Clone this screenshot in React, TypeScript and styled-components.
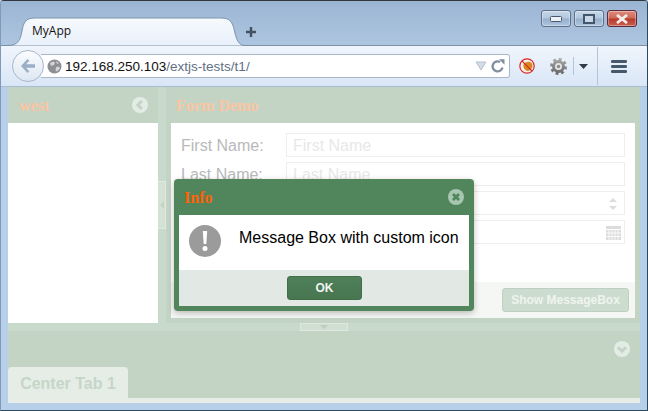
import React from 'react';
import styled, { createGlobalStyle } from 'styled-components';

const Global = createGlobalStyle`
  html, body { margin: 0; padding: 0; background: #b8cfe9; overflow: hidden; }
  * { box-sizing: border-box; }
`;

const Win = styled.div`
  position: relative; width: 648px; height: 411px; display: flex; flex-direction: column;
  background: #b8cfe9; border: 1px solid #2c4a5c; border-top-color: #33363a; border-left-color: #7f9ab8; border-radius: 4px 4px 0 0;
  font-family: "Liberation Sans", Arial, sans-serif; overflow: hidden;
`;
const TitleBar = styled.div`
  height: 45px; flex: none; display: flex; align-items: flex-end; padding-left: 7px; position: relative;
  background: linear-gradient(#9ab5d3, #aec5e0); border-bottom: 1px solid #7c91a8;
`;
const Tab = styled.div`
  position: relative; width: 236px; height: 29px; margin-bottom: -1px; flex: none;
  display: flex; align-items: center; padding: 0 0 3px 24px; font-size: 12px; color: #111; font-family: "Open Sans", sans-serif;
`;
const TabShape = styled.svg`position: absolute; left: 0; top: 0;`;
const TabLabel = styled.span`position: relative;`;
const NewTab = styled.svg`margin: 0 0 7px 1px;`;
const Controls = styled.div`position: absolute; top: 9px; right: 10px; display: flex; gap: 3px;`;
const Ctl = styled.div<{ $close?: boolean }>`
  width: 30px; height: 17px; border-radius: 3px; display: flex; align-items: center; justify-content: center;
  border: 1px solid ${p => p.$close ? '#5c2a3c' : '#5d7088'};
  box-shadow: inset 0 0 0 1px rgba(255,255,255,.35);
  background: ${p => p.$close ? 'linear-gradient(#dd8c7e 0%, #cf6a5a 45%, #b83c2e 55%, #c8604e 100%)' : 'linear-gradient(#c8d8e9 0%, #b2c7df 45%, #97b1cd 55%, #adc4dd 100%)'};
`;
const Nav = styled.div`
  height: 41px; flex: none; display: flex; align-items: center; padding-left: 11px; position: relative;
  background: linear-gradient(#f0f5fc, #d9e6f7); border-bottom: 1px solid #a8bcd2;
`;
const Back = styled.div`
  width: 32px; height: 32px; flex: none; border-radius: 50%; border: 1px solid #a9b8c9; z-index: 1; margin-right: -3px;
  background: linear-gradient(#fbfcfe, #dde7f3); display: flex; align-items: center; justify-content: center;
`;
const UrlBar = styled.div`
  width: 469px; height: 24px; flex: none; background: #fff; border: 1px solid #a9b8c9; border-left: none; border-radius: 0 3px 3px 0;
  display: flex; align-items: center; padding: 0 4px 0 6px; font-size: 13.5px; color: #111;
`;
const UrlText = styled.span`margin-left: 3px; flex: 1; white-space: nowrap;`;
const UrlPath = styled.span`color: #5f7085;`;
const Tools = styled.div`display: flex; align-items: center; flex: 1; padding-left: 9px;`;
const Sep = styled.div<{ $h: number; $ml: number }>`width: 1px; height: ${p => p.$h}px; margin-left: ${p => p.$ml}px; background: #b4c4d6;`;

const Content = styled.div`
  flex: none; height: 316px; margin: 0 7px; display: flex; flex-direction: column; background: #c3d4c5;
`;
const Top = styled.div`height: 236px; flex: none; display: flex; background: #c8dacb;`;
const West = styled.div`width: 150px; flex: none; display: flex; flex-direction: column;`;
const Head = styled.div`
  height: 36px; flex: none; background: #c3d4c5; display: flex; align-items: center; justify-content: space-between;
  padding: 0 10px 0 11px; font: bold 16px "Liberation Serif", serif; color: #fcc4a2;
`;
const HeadTitle = styled.span`padding-top: 2px;`;
const WestBody = styled.div`flex: 1; background: #fff;`;
const VSplit = styled.div`width: 8px; flex: none; position: relative;`;
const VHandle = styled.div`
  position: absolute; top: 94px; left: 0; width: 8px; height: 48px; background: #d4e2d6; border: 1px solid #dde8de; border-left: none;
  display: flex; align-items: center; justify-content: center;
`;
const Center = styled.div`flex: 1; display: flex; flex-direction: column; background: #c3d4c5; padding: 0 5px 5px 0;`;
const CenterHead = styled(Head)`padding-left: 10px;`;
const Form = styled.div`flex: 1; margin-left: 5px; background: #fff; display: flex; flex-direction: column;`;
const Fields = styled.div`flex: 1; padding: 10px 10px 0 10px; display: flex; flex-direction: column; gap: 5px;`;
const Row = styled.div`display: flex; align-items: center; height: 24px;`;
const Label = styled.label`width: 105px; flex: none; padding-top: 1px; font-size: 16px; color: #b9b9b9;`;
const Field = styled.div`
  flex: 1; height: 24px; border: 1px solid #eeeeee; display: flex; align-items: center; justify-content: space-between;
  padding: 1px 3px 0 6px; font-size: 16px; color: #e8e8e8;
`;
const FormFoot = styled.div`height: 36px; flex: none; background: #f5f7f5; display: flex; align-items: center; justify-content: flex-end; padding-right: 6px;`;
const ShowBtn = styled.div`
  width: 127px; height: 24px; background: #ccdccf; border: 1px solid #bed0c2; border-radius: 3px;
  display: flex; align-items: center; justify-content: center; font-size: 12px; font-weight: bold; color: #eff4f0;
`;
const HSplit = styled.div`height: 8px; flex: none; background: #c8dacb; display: flex; justify-content: center;`;
const HHandle = styled.div`width: 48px; height: 8px; background: #d0dfd2; border: 1px solid #dde8de; display: flex; align-items: center; justify-content: center;`;
const South = styled.div`flex: 1; display: flex; flex-direction: column; background: #c3d4c5;`;
const SouthTool = styled.div`height: 36px; flex: none; display: flex; align-items: center; justify-content: flex-end; padding-right: 10px;`;
const TabRow = styled.div`height: 31px; flex: none; display: flex;`;
const CenterTab = styled.div`
  width: 120px; background: #e6ede7; border-radius: 4px 4px 0 0; display: flex; align-items: center; justify-content: center;
  padding-top: 2px; font-size: 16px; font-weight: bold; color: #c5d6c8;
`;
const TabStrip = styled.div`height: 5px; flex: none; background: #e6ede7;`;

const Dialog = styled.div`
  position: absolute; left: 173px; top: 178px; width: 300px; height: 132px; padding: 0 5px 5px; background: #51855c; border-radius: 4px;
  display: flex; flex-direction: column; box-shadow: 0 2px 6px rgba(0,0,0,.25);
`;
const DialogHead = styled.div`
  height: 36px; flex: none; display: flex; align-items: center; justify-content: space-between; padding: 0 5px 0 5px;
  font: bold 16px "Liberation Serif", serif; color: #ff6207;
`;
const DialogBody = styled.div`height: 55px; flex: none; background: #fff; display: flex; align-items: center; padding: 0 0 4px 10px; gap: 18px; font-size: 16px; color: #000;`;
const DialogText = styled.span`margin-bottom: 6px;`;
const DialogFoot = styled.div`flex: 1; background: #e2e8e4; display: flex; align-items: center; justify-content: center;`;
const OkBtn = styled.div`
  width: 75px; height: 24px; border: 1px solid #3f6f4a; border-radius: 3px; background: linear-gradient(#4f8059, #477651);
  display: flex; align-items: center; justify-content: center; padding-left: 1px; font-size: 12px; font-weight: bold; color: #f0f4f0;
`;

const Chevron = ({ dir }: { dir: 'left' | 'down' }) => (
  <svg width="16" height="16" viewBox="0 0 16 16">
    <circle cx="8" cy="8" r="8" fill="#e3ece4" />
    <path d={dir === 'left' ? 'M9.800 4 5.800 8l4 4' : 'M4 6.200l4 4 4-4'} fill="none" stroke="#c3d4c5" strokeWidth="2.800" />
  </svg>
);

export default function App() {
  return (
    <>
      <Global />
      <Win>
        <TitleBar>
          <Tab>
            <TabShape width="236" height="29" viewBox="0 0 236 29">
              <defs>
                <linearGradient id="tg" x1="0" y1="0" x2="0" y2="1">
                  <stop offset="0" stopColor="#f7fafd" />
                  <stop offset="1" stopColor="#e8f0fa" />
                </linearGradient>
              </defs>
              <path d="M0 28.5C10 28 12 24 14 14 15.500 5 18 1 27 1H213c9 0 11.500 4 13.500 13 2 9 4 13.500 9.500 14.500" fill="url(#tg)" stroke="#7f93ab" />
            </TabShape>
            <TabLabel>MyApp</TabLabel>
          </Tab>
          <NewTab width="12" height="12" viewBox="0 0 12 12"><path d="M6 1v10M1 6h10" stroke="#44525f" strokeWidth="2.400" /></NewTab>
          <Controls>
            <Ctl><svg width="12" height="6"><rect x=".5" y=".5" width="11" height="5" rx="1" fill="#eef2f6" stroke="#47586b" /></svg></Ctl>
            <Ctl><svg width="12" height="10"><rect x="1" y="1" width="10" height="8" fill="#c9d8e8" stroke="#44566a" strokeWidth="2" /></svg></Ctl>
            <Ctl $close><svg width="14" height="10" viewBox="0 0 14 10"><path d="M2 1l10 8M12 1 2 9" stroke="#f4ece8" strokeWidth="2.800" /></svg></Ctl>
          </Controls>
        </TitleBar>
        <Nav>
          <Back><svg width="18" height="16" viewBox="0 0 18 16"><path d="M8.500 1 2 8l6.500 7 1.800-1.800L7 9.800h9V6.200H7l3.300-3.400z" fill="#9aafc6" /></svg></Back>
          <UrlBar>
            <svg width="15" height="15" viewBox="0 0 15 15">
              <circle cx="7.500" cy="7.500" r="7" fill="#8d8f92" />
              <path d="M3 4l3-1.500 2 1-1 2.500-3 1zM9 8l3-.5 1 2-3 3-1.500-1zM9 2l3 2-2 1z" fill="#d2d4d6" />
            </svg>
            <UrlText>192.168.250.103<UrlPath>/extjs-tests/t1/</UrlPath></UrlText>
            <svg width="12" height="10" viewBox="0 0 12 10" style={{ marginRight: 4 }}><path d="M1 1h10L6 9z" fill="#d3dbe4" stroke="#b6c2ce" /></svg>
            <svg width="14" height="14" viewBox="0 0 14 14"><path d="M11.500 8.500A5 5 0 1 1 9 3" fill="none" stroke="#7f8e9e" strokeWidth="2.300" /><path d="M8 .3h5.500v5.400z" fill="#7f8e9e" /></svg>
          </UrlBar>
          <Tools>
            <svg width="16" height="16" viewBox="0 0 16 16">
              <circle cx="8" cy="8" r="7.200" fill="#f4f1e8" stroke="#d8262c" strokeWidth="1.200" />
              <path d="M4.500 6.500c2-3.500 6.500-3.500 8.500-1 1.500 3-.5 6.800-4 7.500-2 .3-5.500-3-4.500-6.500z" fill="#d9861e" />
              <path d="M3 3l10 10" stroke="#c8322a" strokeWidth="1.100" />
            </svg>
            <svg width="17" height="17" viewBox="0 0 17 17" style={{ marginLeft: 15 }}>
              <defs>
                <linearGradient id="gg" x1="0" y1="0" x2="0" y2="1">
                  <stop offset="0" stopColor="#a4a4a4" />
                  <stop offset="1" stopColor="#6a6a6a" />
                </linearGradient>
              </defs>
              <circle cx="8.500" cy="8.500" r="6.500" fill="url(#gg)" />
              <circle cx="8.500" cy="8.500" r="7" fill="none" stroke="url(#gg)" strokeWidth="3" strokeDasharray="2.750 2.750" />
              <circle cx="8.500" cy="8.500" r="3.500" fill="#e4e6e8" />
              <circle cx="8.500" cy="8.500" r="1.800" fill="#8c8c8c" />
            </svg>
            <Sep $h={18} $ml={6} />
            <svg width="9" height="5" viewBox="0 0 9 5" style={{ marginLeft: 5 }}><path d="M0 0h9L4.500 5z" fill="#2e3a46" /></svg>
            <Sep $h={38} $ml={9} />
            <svg width="16" height="13" viewBox="0 0 16 13" style={{ marginLeft: 13 }}>
              <rect x="0" y="0" width="16" height="3" rx="1.200" fill="#47586a" />
              <rect x="0" y="5" width="16" height="3" rx="1.200" fill="#47586a" />
              <rect x="0" y="10" width="16" height="3" rx="1.200" fill="#47586a" />
            </svg>
          </Tools>
        </Nav>
        <Content>
          <Top>
            <West>
              <Head><HeadTitle>west</HeadTitle><Chevron dir="left" /></Head>
              <WestBody />
            </West>
            <VSplit>
              <VHandle><svg width="4" height="8" viewBox="0 0 4 8"><path d="M4 0v8L0 4z" fill="#c3d4c5" /></svg></VHandle>
            </VSplit>
            <Center>
              <CenterHead><HeadTitle>Form Demo</HeadTitle></CenterHead>
              <Form>
                <Fields>
                  <Row><Label>First Name:</Label><Field>First Name</Field></Row>
                  <Row><Label>Last Name:</Label><Field>Last Name</Field></Row>
                  <Row><Label />
                    <Field>
                      <span />
                      <svg width="8" height="12" viewBox="0 0 8 12" style={{ marginRight: 4 }}><path d="M4 0l4 4H0zM0 8h8l-4 4z" fill="#dcdcdc" /></svg>
                    </Field>
                  </Row>
                  <Row><Label />
                    <Field>
                      <span />
                      <svg width="15" height="14" viewBox="0 0 15 14">
                        <rect width="15" height="3" fill="#dcdcdc" />
                        <path d="M0 4h15v10H0z" fill="#dcdcdc" />
                        <path d="M0 7h15M0 10.500h15M3 4v10M6 4v10M9 4v10M12 4v10" stroke="#fff" strokeWidth=".8" />
                      </svg>
                    </Field>
                  </Row>
                </Fields>
                <FormFoot><ShowBtn>Show MessageBox</ShowBtn></FormFoot>
              </Form>
            </Center>
          </Top>
          <HSplit>
            <HHandle><svg width="8" height="4" viewBox="0 0 8 4"><path d="M0 0h8L4 4z" fill="#bccebf" /></svg></HHandle>
          </HSplit>
          <South>
            <SouthTool><Chevron dir="down" /></SouthTool>
            <TabRow><CenterTab>Center Tab 1</CenterTab></TabRow>
            <TabStrip />
          </South>
        </Content>
        <Dialog>
          <DialogHead>
            <HeadTitle>Info</HeadTitle>
            <svg width="16" height="16" viewBox="0 0 16 16">
              <circle cx="8" cy="8" r="8" fill="#a7c6b0" />
              <path d="M5 5l6 6M11 5l-6 6" stroke="#51855c" strokeWidth="2.800" />
            </svg>
          </DialogHead>
          <DialogBody>
            <svg width="32" height="32" viewBox="0 0 32 32">
              <circle cx="16" cy="16" r="16" fill="#9b9b9b" />
              <path d="M13.800 6h4.400l-.9 13h-2.600z" fill="#fff" />
              <circle cx="16" cy="23.500" r="2.500" fill="#fff" />
            </svg>
            <DialogText>Message Box with custom icon</DialogText>
          </DialogBody>
          <DialogFoot><OkBtn>OK</OkBtn></DialogFoot>
        </Dialog>
      </Win>
    </>
  );
}
